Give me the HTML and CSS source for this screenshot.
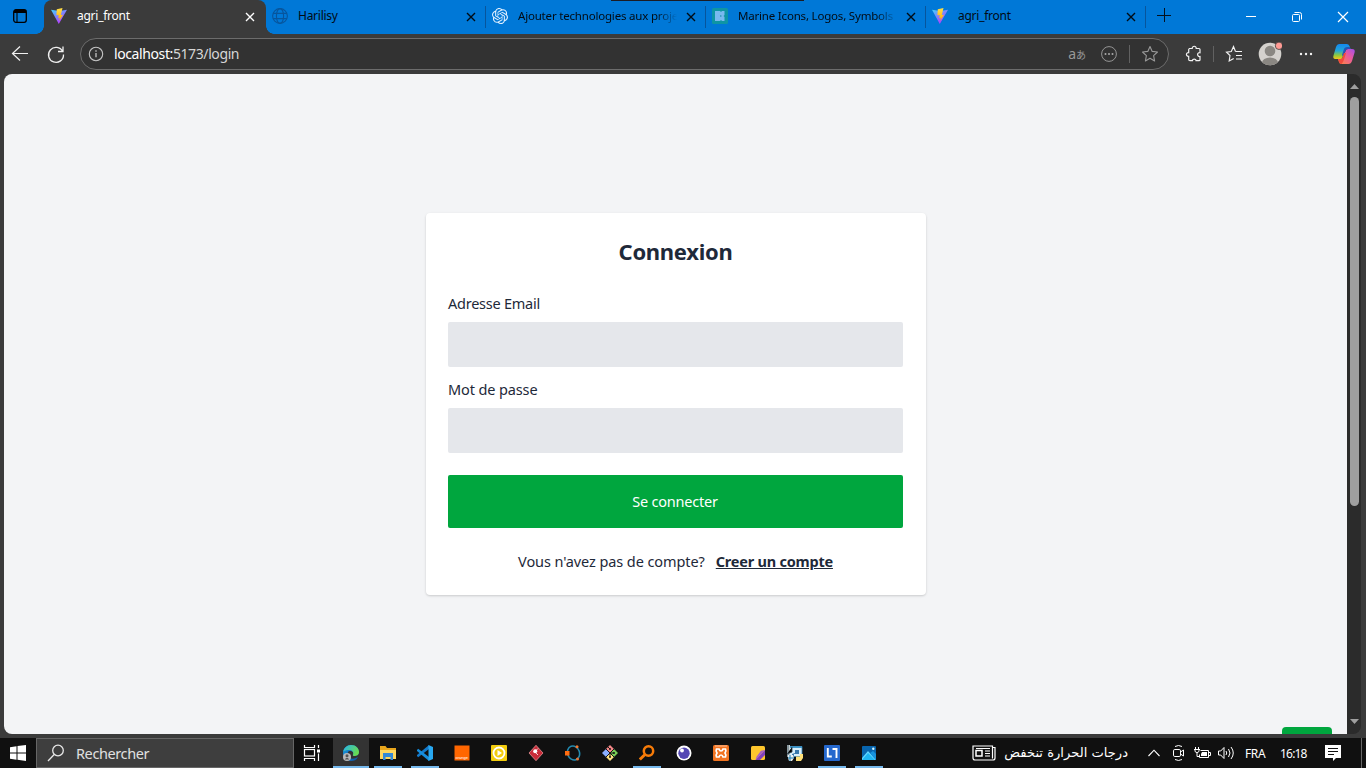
FILE: index.html
```html
<!DOCTYPE html>
<html lang="fr">
<head>
<meta charset="utf-8">
<title>agri_front</title>
<link rel="stylesheet" href="styles.css">
</head>
<body>
<svg class="defs" width="0" height="0">
  <defs>
    <linearGradient id="viteBody" x1="0" y1="0" x2=".6" y2="1"><stop offset="0" stop-color="#41d1ff"/><stop offset="1" stop-color="#bd34fe"/></linearGradient>
    <linearGradient id="viteBolt" x1="0" y1="0" x2="0" y2="1"><stop offset="0" stop-color="#ffe04a"/><stop offset="1" stop-color="#ffa800"/></linearGradient>
    <linearGradient id="copilotA" x1="0" y1="0" x2="0" y2="1"><stop offset="0" stop-color="#1388f0"/><stop offset=".45" stop-color="#22a6d8"/><stop offset=".75" stop-color="#8fc83c"/><stop offset="1" stop-color="#f2c51c"/></linearGradient>
    <linearGradient id="copilotB" x1="1" y1="0" x2="0" y2="1"><stop offset="0" stop-color="#a050ee"/><stop offset=".4" stop-color="#e858a0"/><stop offset="1" stop-color="#ff8a38"/></linearGradient>
    <linearGradient id="edgeBlue" x1="0" y1="0" x2="1" y2="1"><stop offset="0" stop-color="#1b9de2"/><stop offset="1" stop-color="#0c4fa0"/></linearGradient>
    <linearGradient id="edgeGreen" x1="0" y1="0" x2="1" y2=".5"><stop offset="0" stop-color="#26b4ee"/><stop offset="1" stop-color="#68dc50"/></linearGradient>
    <symbol id="vite" viewBox="0 0 16 16"><path d="M0 1.8 7.8 16 16 1.8 8.5 3z" fill="url(#viteBody)"/><path d="M11.5 0 5.8 1.2 5.4 7.3 7.6 6.9 7.3 10.2 8.8 9.7 8.2 13 12 6.7 9.8 7.1z" fill="url(#viteBolt)"/></symbol>
    <symbol id="close" viewBox="0 0 10 10"><path d="M1 1l8 8M9 1 1 9" fill="none" stroke="currentColor" stroke-width="1.35"/></symbol>
    <symbol id="star" viewBox="0 0 18 18"><path d="M9 1.5 11.2 6.4 16.5 7 12.6 10.6 13.6 16 9 13.3 4.4 16 5.4 10.6 1.5 7 6.8 6.4z" fill="none" stroke="currentColor" stroke-width="1.1" stroke-linejoin="round"/></symbol>
  </defs>
</svg>
<div class="screen">
  <header class="tabstrip">
    <div class="workspace"><svg width="16" height="16" viewBox="0 0 16 16"><rect x="1.7" y="1.7" width="12.6" height="12.6" rx="2.2" fill="none" stroke="#000" stroke-width="1.3"/><path d="M2 2h12v3H2z"/><path d="M5 4v10" stroke="#000" stroke-width="1.1"/></svg></div>
    <div class="tab active"><svg class="fav" width="16" height="16"><use href="#vite"/></svg><span class="name">agri_front</span><svg class="x" width="10" height="10"><use href="#close"/></svg></div>
    <div class="tab"><svg class="fav" width="16" height="16" viewBox="0 0 16 16" fill="none" stroke="#07559c" stroke-width="1.1"><circle cx="8" cy="8" r="7.4"/><ellipse cx="8" cy="8" rx="3.6" ry="7.4"/><path d="M1.2 5.4h13.6M1.2 10.6h13.6"/></svg><span class="name">Harilisy</span><svg class="x" width="10" height="10"><use href="#close"/></svg></div>
    <div class="tab"><svg class="fav" width="16" height="16" viewBox="0 0 24 24" fill="#e2f1ff"><path d="M22.280 9.820a5.980 5.980 0 0 0-.520-4.910 6.050 6.050 0 0 0-6.510-2.900A6.070 6.070 0 0 0 4.980 4.180a5.980 5.980 0 0 0-4 2.900 6.050 6.050 0 0 0 .740 7.100 5.980 5.980 0 0 0 .510 4.910 6.050 6.050 0 0 0 6.510 2.900A5.980 5.980 0 0 0 13.260 24a6.060 6.060 0 0 0 5.770-4.210 5.990 5.990 0 0 0 4-2.900 6.060 6.060 0 0 0-.750-7.070zm-9.020 12.610a4.480 4.480 0 0 1-2.880-1.040l.140-.080 4.780-2.760a.790.790 0 0 0 .390-.680v-6.740l2.020 1.170v5.620a4.500 4.500 0 0 1-4.450 4.510zM3.600 18.300a4.470 4.470 0 0 1-.530-3.010l.140.090 4.780 2.760a.770.770 0 0 0 .780 0l5.840-3.370v2.330l-4.870 2.840A4.500 4.500 0 0 1 3.600 18.300zM2.340 7.900a4.490 4.490 0 0 1 2.370-1.980v5.680a.770.770 0 0 0 .390.680l5.810 3.350-2.020 1.170-4.890-2.800A4.500 4.500 0 0 1 2.340 7.900zm16.600 3.860-5.840-3.390 2.020-1.170 4.880 2.800a4.500 4.500 0 0 1-.680 8.100v-5.680a.790.790 0 0 0-.380-.660zm2.010-3.030-.140-.090-4.770-2.780a.780.780 0 0 0-.790 0L9.410 9.230V6.900l4.860-2.820a4.500 4.500 0 0 1 6.680 4.650zM8.310 12.860l-2.020-1.160V6.070a4.500 4.500 0 0 1 7.380-3.450l-.140.080-4.780 2.760a.790.790 0 0 0-.390.680zm1.090-2.360L12 9l2.610 1.500v3L12 15l-2.600-1.500z"/></svg><span class="name fade tight">Ajouter technologies aux proje</span><svg class="x" width="10" height="10"><use href="#close"/></svg></div>
    <div class="tab"><svg class="fav" width="16" height="16" viewBox="0 0 16 16"><rect width="16" height="16" rx="1.5" fill="#0e95a4"/><path d="M3 3h5l1 1 1-1h2.5v4l-1 1 1 1v4H10l-1-1-1 1H3z" fill="#78b9ef"/><circle cx="8.8" cy="8" r=".8" fill="#168da8"/></svg><span class="name fade tight">Marine Icons, Logos, Symbols</span><svg class="x" width="10" height="10"><use href="#close"/></svg></div>
    <div class="tab"><svg class="fav" width="16" height="16"><use href="#vite"/></svg><span class="name">agri_front</span><svg class="x" width="10" height="10"><use href="#close"/></svg></div>
    <svg class="newtab" width="14" height="14" viewBox="0 0 14 14"><path d="M7.5 0v14M0 7.5h14" stroke="#04111f"/></svg>
    <div class="winbtns">
      <svg width="46" height="34" viewBox="0 0 46 34"><path d="M18 16.5h10" stroke="#fff"/></svg>
      <svg width="46" height="34" viewBox="0 0 46 34" fill="none" stroke="#fff"><rect x="18.5" y="14.5" width="7" height="7" rx="1"/><path d="M20.5 12.5h5q2 0 2 2v5"/></svg>
      <svg width="46" height="34" viewBox="0 0 46 34"><path d="M18 12l10 10M28 12 18 22" stroke="#fff" stroke-width="1.2"/></svg>
    </div>
    <i class="topline"></i>
  </header>
  <nav class="toolbar">
    <svg width="36" height="40" viewBox="0 0 36 40" fill="none" stroke="#f0f0f0" stroke-width="1.2"><path d="M28 19.500H12.500M20 12.500l-7.500 7 7.500 7"/></svg>
    <svg width="36" height="40" viewBox="4 0 36 40" fill="none" stroke="#f0f0f0" stroke-width="1.3"><path d="M28.700 17.500A7.500 7.500 0 1 0 29.500 20.500M29 12.500v5h-5"/></svg>
    <div class="address">
      <svg class="info" width="16" height="16" viewBox="0 0 16 16"><circle cx="8" cy="8" r="6.7" fill="none" stroke="#c4c4c4" stroke-width="1.1"/><path d="M8 7v4.2M8 4.300v1.400" stroke="#c4c4c4" stroke-width="1.3"/></svg>
      <span class="url"><b>localhost:</b>5173/login</span>
      <span class="translate">a<small>あ</small></span>
      <svg width="16" height="16" viewBox="0 0 16 16"><circle cx="8" cy="8" r="7.4" fill="none" stroke="#959595"/><g fill="#aaa"><circle cx="4.5" cy="8" r="1"/><circle cx="8" cy="8" r="1"/><circle cx="11.5" cy="8" r="1"/></g></svg>
      <i class="rule"></i>
      <svg class="bookmark" width="18" height="18"><use href="#star"/></svg>
    </div>
    <div class="actions">
      <svg width="18" height="18" viewBox="0 0 18 18" fill="none" stroke="#f2f2f2" stroke-width="1.2"><path d="M4 3.500h3.200C7 .5 11.500.5 11.200 3.500H14q1 0 1 1v3.200c-3.200-.5-3.200 4.300 0 3.800v3.200q0 1-1 1h-3c.2-2.200-3.700-2.200-3.500 0H5q-1.300 0-1.300-1.200v-3.200c-3 .3-3-4 0-3.700V4.500q0-1 1-1z"/></svg>
      <i class="rule"></i>
      <svg class="favs" width="18" height="18" viewBox="0 0 18 18" fill="none" stroke="#f2f2f2" stroke-width="1.150"><path d="M10.500 6.500 8.500 1.500 6.300 6.500 1.500 7.100 5 10.500 4.200 16l4.500-2.600M10.500 6.500H17M11 10.500h6M11 14h6"/></svg>
      <svg class="avatar" width="24" height="26" viewBox="0 0 24 26"><defs><clipPath id="face"><circle cx="12" cy="13" r="11.300"/></clipPath></defs><g clip-path="url(#face)"><path d="M0 0h24v26H0z" fill="#d4d1cd"/><circle cx="12" cy="10" r="5.300" fill="#8a8782"/><ellipse cx="12" cy="22" rx="8" ry="5.500" fill="#8a8782"/></g><circle cx="21" cy="4.800" r="3.700" fill="#ff9b94" stroke="#3b3b3b" stroke-width=".8"/></svg>
      <svg class="more" width="14" height="4" viewBox="0 0 14 4" fill="#f4f4f4"><circle cx="2" cy="2" r="1.2"/><circle cx="7" cy="2" r="1.2"/><circle cx="12" cy="2" r="1.2"/></svg>
      <svg class="copilot" width="22" height="22" viewBox="0 0 22 22"><path d="M6.500 1H14q2 0 2.700 2.500L17.500 6H14q-2 0-2.700 2.500L9.500 14.500Q9 16 7.500 16H3Q-.5 16 .5 12.500L3 4Q4 1 6.500 1z" fill="url(#copilotA)"/><path d="M15.500 21H8.500Q6.500 21 6 19L5 16h3q2 0 2.500-2L12.500 8Q13 6 15 6H19q3.500 0 2.500 3.800L19 18Q18 21 15.500 21z" fill="url(#copilotB)"/><path d="M9 12 11.200 5.500Q11.800 4 14 4h2.800l.7 2H15q-2 0-2.500 2l-2 6z" fill="#2456b8"/><path d="M7.800 16Q9 16 9.500 14.500L11 10h2l-2 6.500Q10.300 19 8.500 21 6.500 21 6 19L5 16z" fill="#f04a3c"/></svg>
    </div>
  </nav>
  <div class="window">
    <main class="page">
      <form class="card">
        <h1><span>Connexion</span></h1>
        <label><span>Adresse Email</span></label><div class="field"></div>
        <label class="pass"><span>Mot de passe</span></label><div class="field"></div>
        <div class="submit"><span>Se connecter</span></div>
        <p><span class="ask">Vous n'avez pas de compte?</span><a>Creer un compte</a></p>
      </form>
      <i class="corner"></i>
    </main>
    <div class="scroll">
      <svg width="9" height="5"><path d="M0 5 4.500 0 9 5z" fill="#9f9f9f"/></svg>
      <i class="thumb"></i>
      <svg width="9" height="5"><path d="M0 0 4.500 5 9 0z" fill="#9f9f9f"/></svg>
    </div>
  </div>
  <footer class="taskbar">
    <div class="start"><svg width="16" height="16" viewBox="0 0 16 16" fill="#fff"><path d="M0 2.200 6.500 1.300V7.500H0zM7.500 1.100 16 0v7.500H7.500zM0 8.500h6.500v6.200L0 13.800zM7.500 8.500H16V16l-8.500-1.200z"/></svg></div>
    <div class="search"><svg width="18" height="18" viewBox="0 0 18 18" fill="none" stroke="#e8e8e8" stroke-width="1.3"><circle cx="11" cy="6.500" r="5.300"/><path d="M7.200 10.500 1 17"/></svg><span>Rechercher</span></div>
    <div class="view"><svg width="18" height="16" viewBox="0 0 18 16" fill="none" stroke="#fff" stroke-width="1.2"><path d="M1.500 0v2.500h10V0M1.500 16v-2.500h10V16M15.500 0v3M15.500 8.500V16"/><rect x="1.500" y="4.500" width="10" height="6.500"/><path d="M14 4.500h3v3h-3z" fill="#fff" stroke="none"/></svg></div>
    <div class="apps">
      <div class="app on current"><svg viewBox="0 0 16 16"><path d="M0 8C0 3 4 0 8 0c5 0 8 3.500 8 7 0 3-2.500 4-5 4-1.500 0-1.200-1-.8-1.700C11 7.500 9 5.500 6.500 6 4 6.500 4 11 7 13q3 2 8-1c-1.500 3-4 4-7 4-5 0-8-4-8-8z" fill="url(#edgeBlue)"/><path d="M.3 6.500C1 3 4 0 8 0c5 0 8 3.500 8 7 0 3-2.500 4-5 4-1.500 0-1.200-1-.8-1.700C11 6 7.500 3 .3 6.500z" fill="url(#edgeGreen)"/><circle cx="4" cy="12" r="4" fill="#b8b8b8"/><circle cx="4" cy="10.700" r="1.500" fill="#555"/><path d="M1.700 14.400q2.300-3.500 4.600 0z" fill="#555"/></svg></div>
      <div class="app on"><svg viewBox="0 0 16 16"><path d="M0 1h5.500l1.500 2h9v11H0z" fill="#e9a61c"/><path d="M0 5h16v9H0z" fill="#ffd75e"/><path d="M3 8h10v7h-2.500v-3h-5v3H3z" fill="#3489d6"/></svg></div>
      <div class="app on"><svg viewBox="0 0 16 16"><path d="M12 0v4L1.200 12.200 0 11V10z" fill="#1479c9"/><path d="M1.200 3.800 0 5v1l12 10v-4z" fill="#168ddc"/><path d="M11.500 0 16 2v12l-4.500 2z" fill="#28a8f1"/></svg></div>
      <div class="app"><svg viewBox="0 0 16 16"><path d="M.5.5h15v15H.5z" fill="#ff6600"/><text x="1.500" y="13.800" class="brand">orange</text></svg></div>
      <div class="app"><svg viewBox="0 0 16 16"><rect width="16" height="16" rx="1" fill="#f2cc0d"/><circle cx="8" cy="8" r="5.500" fill="#f2cc0d" stroke="#fff" stroke-width="1.8"/><path d="M6.500 5v6L11 8z" fill="#fff"/></svg></div>
      <div class="app"><svg viewBox="0 0 16 16"><path d="M8 .3 15 8l-7 7.700L1 8z" fill="#c92c39" stroke="#f0a0a3" stroke-width=".7"/><circle cx="7.200" cy="6.300" r="2" fill="#fff"/><path d="m7 7 3 3M10 3.500 7.500 6" stroke="#fff" stroke-width=".8"/></svg></div>
      <div class="app"><svg viewBox="0 0 16 16" fill="none"><ellipse cx="8.500" cy="8" rx="6" ry="7.100" transform="rotate(-20 8.500 8)" stroke="#2389ae" stroke-width="1.600"/><path d="M0 6h4.500v4.500H0z" fill="#ff6c10"/><circle cx="12" cy="1.700" r="1.500" fill="#f07930"/><circle cx="12.500" cy="14" r="1.500" fill="#e57537"/></svg></div>
      <div class="app"><svg viewBox="0 0 16 16"><path d="m8 0 4 4-4 4-4-4z" fill="#f58888"/><path d="m4 4 4 4-4 4-4-4z" fill="#8aaeff"/><path d="m12 4 4 4-4 4-4-4z" fill="#78ce56"/><path d="m8 8 4 4-4 4-4-4z" fill="#ffe383"/><path d="m3.500 3.500 9 9M12.500 3.500l-9 9M8 8h4M8 8v4M6 2l2 2" stroke="#171717" stroke-width="1"/><g fill="#171717"><circle cx="8" cy="4" r="1"/><circle cx="12" cy="8" r="1"/><circle cx="8" cy="12" r="1"/></g></svg></div>
      <div class="app on"><svg viewBox="0 0 16 16" fill="none" stroke="#f77b08"><circle cx="9.500" cy="6" r="4.700" stroke-width="2.500"/><path d="M6 9.500.8 14.500" stroke-width="3"/></svg></div>
      <div class="app"><svg viewBox="0 0 16 16"><circle cx="8" cy="8" r="7.500" fill="#fff"/><circle cx="8" cy="8.200" r="5.700" fill="#5548b4"/><circle cx="6" cy="5.500" r="1.900" fill="#fff"/></svg></div>
      <div class="app"><svg viewBox="0 0 16 16"><rect width="16" height="16" rx="1.500" fill="#f27421"/><path d="M2 1h12" stroke="#ffc19a"/><path d="M6 4H3.500Q2.500 6 4 8q-1.500 2-.5 4H6q.5-2 2-2t2 2h2.500q1-2-.5-4 1.500-2 .5-4H10Q9.500 6 8 6T6 4z" fill="none" stroke="#fff" stroke-width="1.700"/></svg></div>
      <div class="app"><svg viewBox="0 0 16 16"><rect x="1" y="1" width="14" height="14" rx="1.500" fill="#fec62d"/><path d="M15 5v5l-5 5H5.500z" fill="#8040bd"/><path d="M5.500 15 15 5l-4 .8-4.500 6z" fill="#a45dca"/></svg></div>
      <div class="app"><svg viewBox="0 0 16 16"><path d="M2 1.500h13v10H2z" fill="#d7edf9" stroke="#3484b7" stroke-width=".8"/><path d="M2 1.500h13V3H2z" fill="#3b97cc"/><path d="M0 0v12h3V0z" fill="#c7d2d6"/><path d="M1 0v12M5 2v5L0 9" stroke="#273b48" stroke-width=".8"/><path d="M8 5h4v4H7v3H5V9l3-1z" fill="#3878ac"/><path d="M9 14v-2.500h4V9h3v4l-2 3H9z" fill="#ffe078"/><path d="M1 10h5l1 3-2 3H2l-1-3z" fill="#eee"/><path d="M3 10v6M1 13h6" stroke="#197eb5"/></svg></div>
      <div class="app on"><svg viewBox="0 0 16 16"><rect width="16" height="16" rx="1" fill="#2568ce"/><path d="M3.800 3v8.500h4M8.500 4h4v9" fill="none" stroke="#fff" stroke-width="1.900"/></svg></div>
      <div class="app on"><svg viewBox="0 0 16 16"><rect x="1" y="1" width="14" height="14" rx="1" fill="#0865ae"/><path d="m1 13 6-7 8 9H1z" fill="#61d7ff"/><path d="m1 15 6-7 7 7z" fill="#1eb5f2"/><path d="m9 8 3-2 3 3v6z" fill="#1693de"/><circle cx="12.300" cy="3.800" r="1.200" fill="#d8f6ff"/></svg></div>
    </div>
    <div class="tray">
      <svg class="news" width="24" height="16" viewBox="0 0 24 16" fill="none" stroke="#fff" stroke-width="1.2"><path d="M20.500 2.500h2.500V13q0 2-2 2H3q-2 0-2-2V1h19.500v12.500"/><path d="M4 5.500h6V11H4z" stroke-width="1.500"/><path d="M4 3.500h14M13 6h5M13 8.500h5M13 11h5"/></svg>
      <span class="weather" dir="rtl" lang="ar">درجات الحرارة تنخفض</span>
      <svg class="chev" width="12" height="8" viewBox="0 0 12 8"><path d="M.5 7 6 1.200 11.500 7" fill="none" stroke="#fff" stroke-width="1.1"/></svg>
      <svg class="cam" width="14" height="16" viewBox="0 0 14 16" fill="none" stroke="#fff"><rect x="1.500" y="4.500" width="7" height="7" rx="1.300"/><path d="m8.500 7 3-2v6l-3-2M3 1.500q3.500-2 7 0M3 14.500q3.500 2 7 0"/></svg>
      <svg class="batt" width="17" height="12" viewBox="0 0 17 12" fill="none" stroke="#fff"><path d="M1.500 0v2M4.500 0v2M0 2.500h6M1 3v1.500Q3 7 5 4.500V3M3 6v3.500h3"/><path d="M6.500 3.500h8v7h-9v-3M15 5.500h1.500v3H15"/><path d="M8 5h5v4H7V7z" fill="#fff" stroke="none"/></svg>
      <svg class="vol" width="17" height="14" viewBox="0 0 17 14" fill="none" stroke="#fff"><path d="M.5 5h2.200L6 1.500v11L2.700 9H.5zM8 5q1.500 2 0 4M10.500 3q3 4 0 8M13 1q4.500 6 0 12"/></svg>
      <span class="lang">FRA</span><span class="clock">16:18</span>
      <svg class="notif" width="16" height="16" viewBox="0 0 16 16"><path d="M0 0h16v13H11l-3 3v-3H0z" fill="#fff"/><path d="M3 3.500h10M3 6.500h10M3 9.500h6" stroke="#111"/></svg>
    </div>
  </footer>
</div>
</body>
</html>
```
FILE: styles.css
```css
* { box-sizing: border-box; }
body { margin: 0; overflow: hidden; font-family: "Noto Sans", "Open Sans", sans-serif; }
svg { display: block; flex: none; }
.defs { position: absolute; }
.screen { width: 1366px; height: 768px; display: flex; flex-direction: column; background: #3b3b3b; }
.tabstrip { position: relative; height: 34px; display: flex; background: #0078d7; flex: none; }
.topline { position: absolute; left: 611px; top: 0; width: 193px; height: 1px; background: #1c1c24; }
.workspace { width: 44px; padding: 8px 12px; }
.tab { width: 220px; display: flex; align-items: center; padding: 0 9px 3px 6px; font-size: 12px; letter-spacing: -.25px; color: #020b14; border-right: 1px solid transparent; border-image: linear-gradient(transparent 7px, #07559c 7px 27px, transparent 27px) 1; border-width: 0 1px 0 0; }
.tab .name { margin-left: 10px; width: 160px; white-space: nowrap; }
.tab .x { margin-left: auto; margin-top: 3px; }
.tab .tight { font-size: 11.5px; letter-spacing: -.19px; }
.fade { -webkit-mask-image: linear-gradient(90deg, #000 138px, transparent 159px); mask-image: linear-gradient(90deg, #000 138px, transparent 159px); }
.tab.active { position: relative; width: 222px; padding-left: 7px; padding-right: 11px; background: #3b3b3b; color: #fff; border: 0; border-radius: 8px 8px 0 0; }
.tab.active::before, .tab.active::after { content: ""; position: absolute; bottom: 0; width: 8px; height: 8px; }
.tab.active::before { left: -8px; background: radial-gradient(circle at 0 0, #0078d7 7.5px, #3b3b3b 8px); }
.tab.active::after { right: -8px; background: radial-gradient(circle at 100% 0, #0078d7 7.5px, #3b3b3b 8px); }
.newtab { margin: 8px 0 0 11px; }
.winbtns { display: flex; margin-left: auto; }
.toolbar { height: 40px; flex: none; display: flex; align-items: center; }
.toolbar > svg:nth-child(2) { margin-left: 2px; }
.address { height: 32px; width: 1089px; margin-left: 6px; border: 1px solid #6c6c6c; border-radius: 16px; background: #323232; display: flex; align-items: center; padding: 0 9px 0 7px; }
.url { margin: -2px 0 0 10px; font-size: 14px; letter-spacing: -.4px; color: #d6d6d6; }
.url b { font-weight: 400; color: #fff; }
.translate { margin-left: auto; margin-right: 15px; color: #999; font-size: 14px; line-height: 16px; }
.translate small { font-family: "Noto Sans CJK JP", sans-serif; font-size: 10px; }
.rule { width: 1px; height: 18px; background: #616161; }
.address .rule { margin-left: 12px; }
.bookmark { margin-left: 11px; color: #999; }
.actions { display: flex; align-items: center; padding-left: 16px; }
.actions .rule { margin-left: 10px; height: 16px; }
.favs { margin-left: 11px; }
.avatar { margin-left: 15px; }
.more { margin-left: 17px; }
.copilot { margin-left: 20px; }
.window { height: 660px; margin: 0 5px 4px 4px; display: flex; flex: none; overflow: hidden; border-radius: 8px; }
.page { position: relative; width: 1343px; background: #f3f4f6; display: flex; justify-content: center; align-items: flex-start; }
.card { width: 500px; height: 382px; margin-top: 139px; padding: 22px; background: #fff; border-radius: 4px; box-shadow: 0 1px 3px rgba(0,0,0,.1), 0 1px 2px rgba(0,0,0,.08); color: #1e2939; font-size: 14.5px; display: flex; flex-direction: column; }
h1 { margin: 0 0 23px; font-size: 22px; line-height: 32px; text-align: center; letter-spacing: -.3px; }
label { height: 32px; line-height: 27px; letter-spacing: -.24px; padding-left: .5px; }
.pass { letter-spacing: -.12px; height: 33px; }
.field { width: 455px; height: 45px; background: #e5e7eb; border-radius: 2px; margin-bottom: 9px; }
.submit { width: 455px; height: 53px; margin-top: 13px; border-radius: 2px; background: #00a63e; color: #fff; display: flex; align-items: center; justify-content: center; padding-bottom: 1px; letter-spacing: -.2px; }
p { margin: 21px 0 0; text-align: center; line-height: 24px; letter-spacing: -.09px; }
p a { margin-left: 11px; font-weight: 700; text-decoration: underline; letter-spacing: -.22px; }
.corner { position: absolute; left: 1278px; bottom: 0; width: 50px; height: 7px; background: #00a63e; border-radius: 4px 4px 0 0; }
.scroll { width: 14px; background: #2b2b2b; display: flex; flex-direction: column; align-items: center; padding: 10px 0; }
.thumb { width: 9px; height: 409px; margin: 8px 0 auto; border-radius: 5px; background: #9f9f9f; }
.taskbar { height: 30px; flex: none; display: flex; background: #101010; color: #fff; }
.start { width: 36px; padding: 7px 10px; }
.search { width: 258px; border: 1px solid #666; background: #3e3e3e; display: flex; align-items: center; padding-left: 10px; font-size: 14.5px; letter-spacing: -.4px; color: #e0e0e0; }
.search span { margin-left: 11px; }
.view { width: 39px; padding: 7px 9px; }
.apps { display: flex; gap: 1px; }
.app { width: 36px; height: 30px; display: flex; justify-content: center; padding-top: 7px; background: linear-gradient(#76b9ed, #76b9ed) 50% 100% / 0 2px no-repeat; }
.app svg { width: 16px; height: 16px; }
.app.on { background-size: 28px 2px; }
.app.current { background-size: 36px 2px; background-color: #333; }
.brand { fill: #fff; font: 4px "Liberation Sans", sans-serif; }
.tray { margin-left: auto; width: 394px; height: 30px; display: flex; align-items: center; border-right: 1px solid #666; margin-right: 4px; font-size: 12px; }
.news { margin-left: 4px; }
.weather { width: 124px; margin-left: 8px; font: 13.1px/30px "DejaVu Sans", sans-serif; white-space: nowrap; }
.chev { margin-left: 20px; }
.cam { margin-left: 12px; }
.batt { margin-left: 8px; }
.vol { margin-left: 7px; }
.lang { width: 24px; margin-left: 10px; letter-spacing: -.4px; }
.clock { width: 30px; margin-left: 11px; letter-spacing: -.8px; }
.notif { margin-left: 15px; }
```
